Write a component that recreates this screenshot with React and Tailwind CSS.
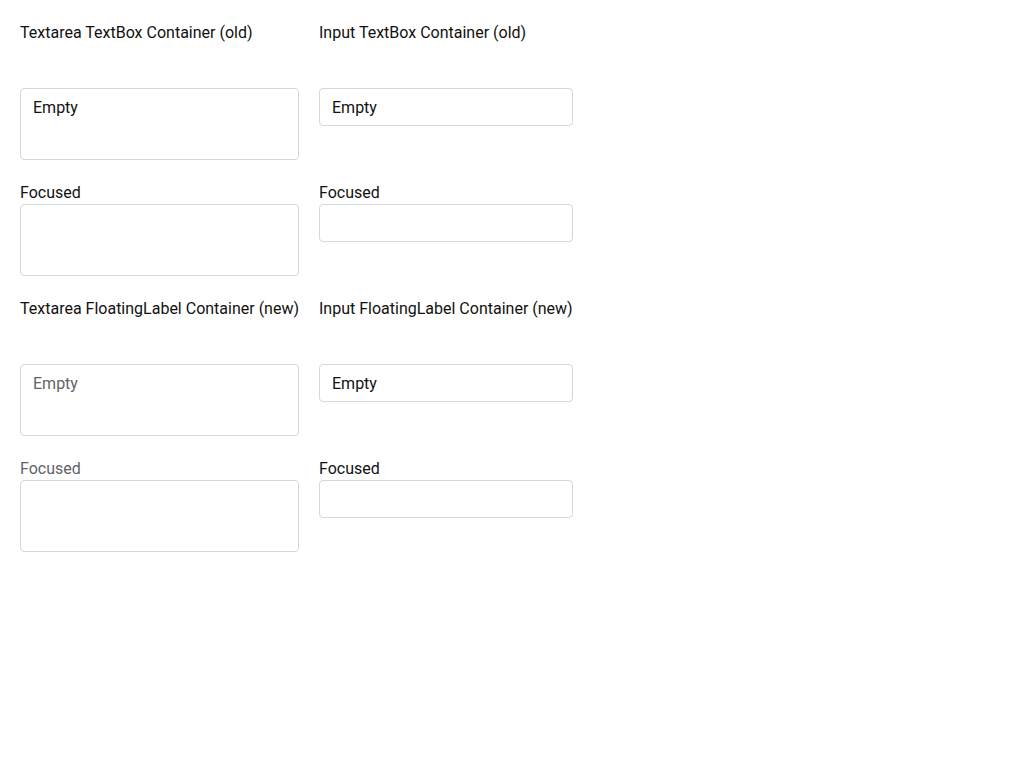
import React from "react";

function Field({ label, labelGray, kind, text, textGray }) {
  return (
    <div className="flex flex-col">
      <div className={`h-6 leading-[26px] ${labelGray ? "text-[#5f6368]" : "text-[#111111]"}`}>{label}</div>
      <div className="h-[72px]">
        {kind === "textarea" ? (
          <div className={`h-[72px] w-full rounded border border-[#d4d7dc] bg-white px-3 pt-[7px] leading-6 ${textGray ? "text-[#5f6368]" : "text-[#111111]"}`}>
            {text}
          </div>
        ) : (
          <div className="h-[38px] w-full overflow-hidden rounded border border-[#d4d7dc] bg-white px-3 leading-[38px] text-[#111111]">
            {text}
          </div>
        )}
      </div>
    </div>
  );
}

function Section({ leftTitle, rightTitle, floating }) {
  return (
    <div className="grid grid-cols-[279px_254px] gap-x-5 gap-y-5">
      <div className="h-6 leading-[26px] text-[#111111] whitespace-nowrap">{leftTitle}</div>
      <div className="h-6 leading-[26px] text-[#111111] whitespace-nowrap">{rightTitle}</div>
      <Field label="" kind="textarea" text="Empty" textGray={floating} />
      <Field label="" kind="input" text="Empty" />
      <Field label="Focused" labelGray={floating} kind="textarea" text="" />
      <Field label="Focused" kind="input" text="" />
    </div>
  );
}

export default function App() {
  return (
    <div
      className="min-h-[768px] w-[1024px] bg-white p-5 text-[16px]"
      style={{ fontFamily: "Roboto, 'Liberation Sans', sans-serif" }}
    >
      <div className="flex flex-col gap-5">
        <Section leftTitle="Textarea TextBox Container (old)" rightTitle="Input TextBox Container (old)" />
        <Section leftTitle="Textarea FloatingLabel Container (new)" rightTitle="Input FloatingLabel Container (new)" floating />
      </div>
    </div>
  );
}
